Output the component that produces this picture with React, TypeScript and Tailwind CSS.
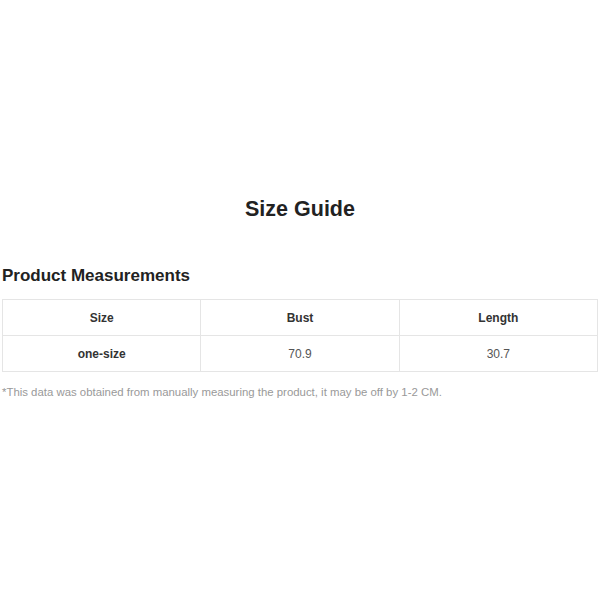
export default function App() {
  const rows = [{ size: "one-size", bust: "70.9", length: "30.7" }];
  return (
    <div className="w-[600px] h-[600px] bg-white font-['Liberation_Sans',Arial,sans-serif] text-[#222]">
      <div className="pt-[196px] px-[2px]">
        <h1 className="text-center text-[21.5px] leading-[27px] font-bold">Size Guide</h1>
        <h2 className="mt-[42px] text-[17px] leading-[22px] font-semibold text-[#222]">Product Measurements</h2>
        <table className="mt-[12px] w-[596px] border-collapse table-fixed text-[12px] text-[#333]">
          <thead>
            <tr className="h-[36px]">
              <th className="border border-[#e5e5e5] font-bold">Size</th>
              <th className="border border-[#e5e5e5] font-bold">Bust</th>
              <th className="border border-[#e5e5e5] font-bold">Length</th>
            </tr>
          </thead>
          <tbody>
            {rows.map((r) => (
              <tr key={r.size} className="h-[36px] text-center">
                <td className="border border-[#e5e5e5] font-bold">{r.size}</td>
                <td className="border border-[#e5e5e5] text-[#555]">{r.bust}</td>
                <td className="border border-[#e5e5e5] text-[#555]">{r.length}</td>
              </tr>
            ))}
          </tbody>
        </table>
        <p className="mt-[12px] text-[11.4px] leading-[16px] text-[#999]">
          *This data was obtained from manually measuring the product, it may be off by 1-2 CM.
        </p>
      </div>
    </div>
  );
}
